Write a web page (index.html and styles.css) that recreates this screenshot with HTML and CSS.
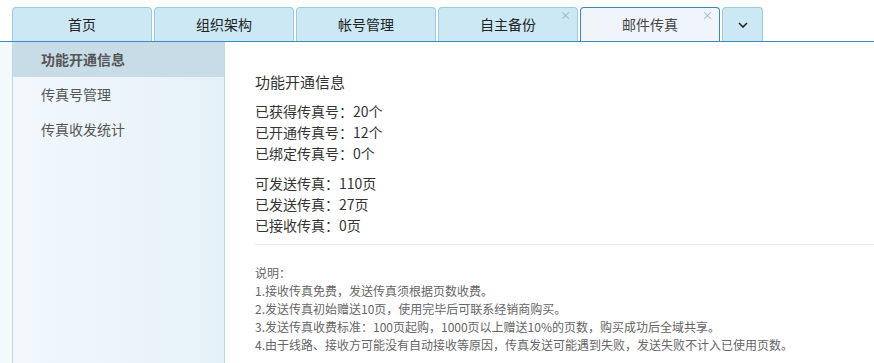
FILE: index.html
```html
<!DOCTYPE html>
<html lang="zh-CN">
<head>
    <meta charset="UTF-8">
    <title>邮件传真</title>
    <link rel="stylesheet" href="styles.css">
</head>
<body>
    <div class="tabbar">
        <div class="tab">首页</div>
        <div class="tab">组织架构</div>
        <div class="tab">帐号管理</div>
        <div class="tab">自主备份<span class="close">×</span></div>
        <div class="tab active">邮件传真<span class="close">×</span></div>
        <div class="tab more">
            <svg width="10" height="6" viewBox="0 0 10 6"><path d="M1 1 L5 5 L9 1" fill="none" stroke="#222" stroke-width="1.6"/></svg>
        </div>
    </div>
    <div class="main">
        <div class="gutter"></div>
        <div class="side">
            <div class="item current">功能开通信息</div>
            <div class="item">传真号管理</div>
            <div class="item">传真收发统计</div>
        </div>
        <div class="content">
            <h3>功能开通信息</h3>
            <div class="group">
                <p>已获得传真号：20个</p>
                <p>已开通传真号：12个</p>
                <p>已绑定传真号：0个</p>
            </div>
            <div class="group">
                <p>可发送传真：110页</p>
                <p>已发送传真：27页</p>
                <p>已接收传真：0页</p>
            </div>
            <div class="notes">
                <p>说明：</p>
                <p>1.接收传真免费，发送传真须根据页数收费。</p>
                <p>2.发送传真初始赠送10页，使用完毕后可联系经销商购买。</p>
                <p>3.发送传真收费标准：100页起购，1000页以上赠送10%的页数，购买成功后全域共享。</p>
                <p>4.由于线路、接收方可能没有自动接收等原因，传真发送可能遇到失败，发送失败不计入已使用页数。</p>
            </div>
        </div>
    </div>
</body>
</html>
```

FILE: styles.css
```css
html, body {
    height: 100%;
}
body {
    margin: 0;
    font-family: "Microsoft YaHei", "Noto Sans CJK SC", sans-serif;
    color: #333;
    background-color: #fff;
    display: flex;
    flex-direction: column;
}
p {
    margin: 0;
}
.tabbar {
    display: flex;
    align-items: flex-end;
    gap: 2px;
    height: 42px;
    padding-left: 12px;
    border-bottom: 1px solid #3a8cc0;
    box-sizing: border-box;
}
.tab {
    position: relative;
    width: 140px;
    height: 34px;
    box-sizing: border-box;
    background-color: #cce8f5;
    border: 1px solid #9ccbe1;
    border-bottom: none;
    border-radius: 4px 4px 0 0;
    font-size: 14px;
    line-height: 33px;
    text-align: center;
    color: #222;
}
.tab.active {
    background-color: #eff5fa;
    border-color: #3f86b5;
    color: #444;
}
.tab.more {
    width: 41px;
    display: flex;
    align-items: center;
    justify-content: center;
}
.close {
    position: absolute;
    top: 2px;
    right: 6px;
    font-size: 11px;
    line-height: 11px;
    color: #8fb0c8;
}
.main {
    flex: 1;
    display: flex;
}
.gutter {
    width: 12px;
    background-color: #f4f9fc;
}
.side {
    width: 213px;
    box-sizing: border-box;
    border-left: 1px solid #b9d9ea;
    border-right: 1px solid #b9d9ea;
    background: linear-gradient(to right, #f2f8fc, #e5f1f8);
}
.item {
    height: 35px;
    line-height: 34px;
    padding-left: 28px;
    font-size: 14px;
    color: #555;
}
.item.current {
    background-color: #c8dce8;
    font-weight: bold;
}
.content {
    flex: 1;
    padding-left: 30px;
    padding-top: 29px;
}
h3 {
    margin: 0 0 8px;
    font-size: 15px;
    font-weight: normal;
    line-height: 22px;
}
.group {
    font-size: 14px;
    line-height: 21px;
    margin-bottom: 9px;
}
.group + .group {
    margin-bottom: 0;
    padding-bottom: 8px;
    border-bottom: 1px solid #e8e8e8;
}
.notes {
    padding-top: 19px;
    font-size: 12px;
    line-height: 18px;
    color: #666;
}
```
